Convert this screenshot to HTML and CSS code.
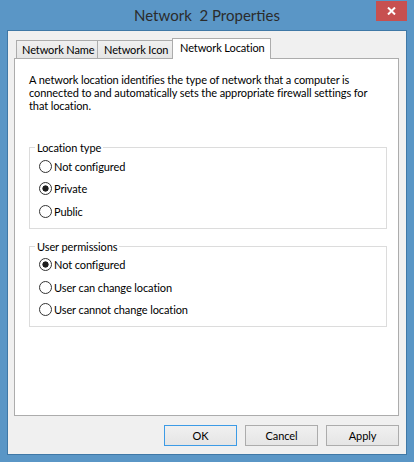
FILE: index.html
```html
<!DOCTYPE html>
<html lang="en">
<head>
<meta charset="utf-8">
<title>Network 2 Properties</title>
<link rel="stylesheet" href="styles.css">
</head>
<body>
<div class="window">
  <div class="titlebar">
    <span class="title">Network&nbsp; 2 Properties</span>
    <button class="close" aria-label="Close">
      <svg width="9" height="8" viewBox="0 0 9 8"><path d="M1 0.5 L8 7.5 M8 0.5 L1 7.5" stroke="#fff" stroke-width="2"/></svg>
    </button>
  </div>
  <div class="client">
    <div class="tabs">
      <div class="tab tab-name">Network Name</div>
      <div class="tab tab-icon">Network Icon</div>
      <div class="tab tab-location active">Network Location</div>
    </div>
    <div class="panel">
      <p class="desc">A network location identifies the type of network that a computer is<br>connected to and automatically sets the appropriate firewall settings for<br>that location.</p>
      <fieldset class="group">
        <legend>Location type</legend>
        <label class="opt"><span class="radio"></span>Not configured</label>
        <label class="opt"><span class="radio checked"></span>Private</label>
        <label class="opt"><span class="radio"></span>Public</label>
      </fieldset>
      <fieldset class="group group-perm">
        <legend>User permissions</legend>
        <label class="opt"><span class="radio checked"></span>Not configured</label>
        <label class="opt"><span class="radio"></span>User can change location</label>
        <label class="opt"><span class="radio"></span>User cannot change location</label>
      </fieldset>
    </div>
    <div class="buttons">
      <button class="btn default">OK</button>
      <button class="btn">Cancel</button>
      <button class="btn">Apply</button>
    </div>
  </div>
</div>
</body>
</html>
```
FILE: styles.css
```css
* { box-sizing: border-box; }
html, body { margin: 0; padding: 0; }
body {
  width: 414px;
  height: 462px;
  font-family: Lato, "Noto Sans", sans-serif;
  font-size: 11px;
  letter-spacing: -0.1px;
  color: #000;
}
.window {
  width: 414px;
  height: 462px;
  background: #5a96c6;
  padding: 0 7px 7px 7px;
  display: flex;
  flex-direction: column;
}
.titlebar {
  height: 30px;
  margin: 0 -7px;
  display: flex;
  justify-content: center;
  align-items: center;
  position: relative;
}
.title {
  font-size: 15px;
  letter-spacing: 0;
  color: #2b2b2b;
  line-height: 20px;
}
.close {
  position: absolute;
  right: 7px;
  top: 1px;
  width: 31px;
  height: 20px;
  border: 0;
  padding: 0;
  background: #c75050;
  display: flex;
  align-items: center;
  justify-content: center;
}
.close svg { display: block; }
.client {
  flex: 1;
  background: #f0f0f0;
  border: 1px solid #3f78a6;
  padding: 7px 7px 8px 6px;
  display: flex;
  flex-direction: column;
}
.tabs {
  display: flex;
  align-items: flex-end;
  padding-left: 2px;
  margin-bottom: -1px;
  position: relative;
  z-index: 1;
}
.tab {
  height: 18px;
  margin-bottom: 1px;
  border: 1px solid #acacac;
  border-bottom: 0;
  background: linear-gradient(#f0f0f0, #e5e5e5);
  padding: 1px 0 0 5px;
  line-height: 16px;
  white-space: nowrap;
  overflow: hidden;
}
.tab-name { width: 82px; }
.tab-icon { width: 77px; margin-left: -1px; padding-left: 6px; }
.tab.active {
  width: 99px;
  height: 21px;
  margin-bottom: 0;
  margin-left: -2px;
  background: #fff;
  padding-left: 7px;
  padding-top: 1px;
}
.panel {
  flex: 1;
  background: #fff;
  border: 1px solid #acacac;
  padding: 14px 11px 0 14px;
}
.desc {
  margin: 0 0 28px 0;
  line-height: 13px;
  white-space: nowrap;
}
.group {
  margin: 0;
  border: 1px solid #dcdcdc;
  padding: 0 0 5px 9px;
}
.group legend {
  padding: 0 2px;
  margin-left: -4px;
  line-height: 15px;
}
.group-perm { margin-top: 10px; }
.opt {
  display: flex;
  align-items: center;
  height: 22.5px;
}
.radio {
  width: 13px;
  height: 13px;
  border: 1px solid #333;
  border-radius: 50%;
  background: #fff;
  margin-right: 2px;
  flex: none;
}
.radio.checked {
  background: radial-gradient(circle, #1e1e1e 0 2.8px, #fff 3.4px);
}
.buttons {
  margin-top: 9px;
  display: flex;
  justify-content: flex-end;
  gap: 8px;
}
.btn {
  width: 73px;
  height: 21px;
  border: 1px solid #acacac;
  background: linear-gradient(#f0f0f0, #e5e5e5);
  font-family: inherit;
  font-size: 11px;
  letter-spacing: inherit;
  color: #000;
  padding: 0;
}
.btn.default { border-color: #3c9be6; }
```
